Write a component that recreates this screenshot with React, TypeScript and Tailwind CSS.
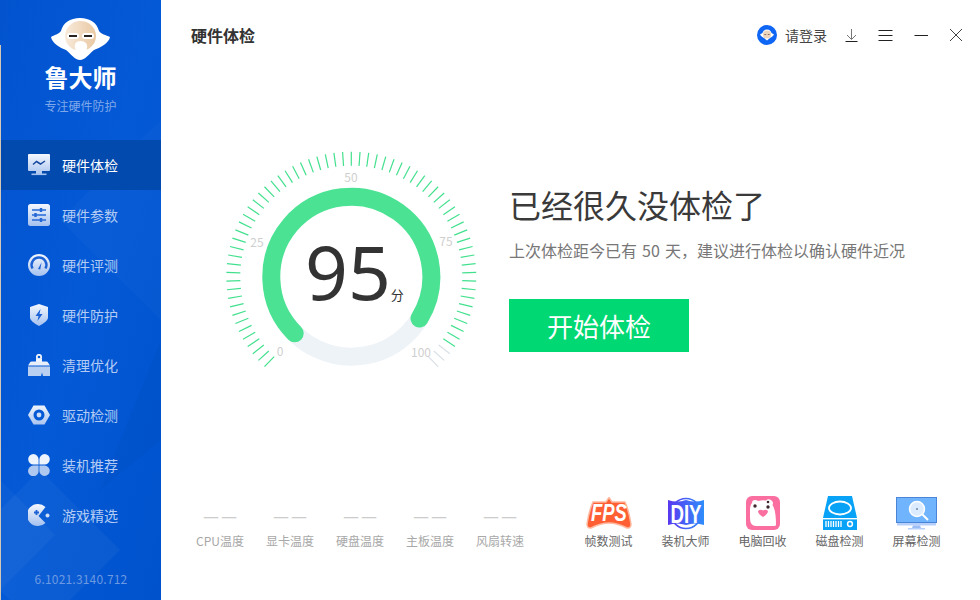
import type { ReactNode } from "react";

const CENTER_X = 141.3;
const CENTER_Y = 136.7;

const polar = (deg: number, r: number) => {
  const a = (deg * Math.PI) / 180;
  return { x: CENTER_X + r * Math.sin(a), y: CENTER_Y - r * Math.cos(a) };
};

const arcPath = (from: number, to: number, r: number) => {
  const s = polar(from, r);
  const e = polar(to, r);
  const large = to - from > 180 ? 1 : 0;
  return `M${s.x} ${s.y} A${r} ${r} 0 ${large} 1 ${e.x} ${e.y}`;
};

function NavIcon({ children }: { children: ReactNode }) {
  return (
    <svg width="22" height="22" viewBox="0 0 22 22" className="shrink-0">
      <defs>
        <linearGradient id="navGrad" gradientUnits="userSpaceOnUse" x1="0" y1="0" x2="0" y2="22">
          <stop offset="0" stopColor="#f4f8fe" />
          <stop offset="1" stopColor="#a5c1ef" />
        </linearGradient>
      </defs>
      {children}
    </svg>
  );
}

const navItems = [
  {
    label: "硬件体检",
    active: true,
    icon: (
      <>
        <rect x="0" y="0" width="22" height="17" rx="1" fill="url(#navGrad)" />
        <path d="M5 10.5 L8.5 7.5 L12.5 10 L17 7" fill="none" stroke="#17499f" strokeWidth="1.5" />
        <rect x="8" y="17" width="6" height="3" fill="#b5cbef" />
        <rect x="3.5" y="19.5" width="15" height="1.6" fill="#a5c1ef" />
      </>
    ),
  },
  {
    label: "硬件参数",
    icon: (
      <>
        <rect x="0" y="0" width="22" height="22" rx="2.5" fill="url(#navGrad)" />
        <path d="M4 6h14M4 11h14M4 16h14" stroke="#2468d6" strokeWidth="1.6" />
        <path d="M13 4v4M7.5 9v4M13 14v4" stroke="#2468d6" strokeWidth="2.4" />
      </>
    ),
  },
  {
    label: "硬件评测",
    icon: (
      <>
        <circle cx="11" cy="11" r="11" fill="url(#navGrad)" />
        <path d="M4.5 14.5 A7.4 7.4 0 1 1 17.5 14.5" fill="none" stroke="#1c62d4" strokeWidth="2.4" />
        <path d="M10 15 L13.5 8.5 L12.2 15.6 Z" fill="#1c62d4" />
      </>
    ),
  },
  {
    label: "硬件防护",
    icon: (
      <>
        <path d="M11 0 L20 3 V14 Q19.5 17.5 11 22 Q2.5 17.5 2 14 V3 Z" fill="url(#navGrad)" />
        <path d="M12.5 5 L7.5 12 H10.5 L9.5 17 L14.5 10 H11.5 Z" fill="#1c62d4" />
      </>
    ),
  },
  {
    label: "清理优化",
    icon: (
      <>
        <circle cx="11" cy="3" r="2.2" fill="none" stroke="url(#navGrad)" strokeWidth="1.8" />
        <rect x="8" y="4.5" width="6" height="3.5" fill="#f0f5fd" />
        <path d="M2 8.5 Q2 7.5 4 7.5 H18 Q20 7.5 20 8.5 L22 11.5 H0 Z" fill="#e8effb" />
        <path d="M0 12.5 H22 V22 H15 L14 18.5 L13 22 H0 Z" fill="#b9cff2" />
      </>
    ),
  },
  {
    label: "驱动检测",
    icon: (
      <>
        <path
          fillRule="evenodd"
          d="M5.5 1.5 H16.5 L22 11 L16.5 20.5 H5.5 L0 11 Z M11 5.5 A5.5 5.5 0 1 0 11 16.5 A5.5 5.5 0 1 0 11 5.5 Z"
          fill="url(#navGrad)"
        />
        <circle cx="11" cy="11" r="2.4" fill="#cfddf6" />
      </>
    ),
  },
  {
    label: "装机推荐",
    icon: (
      <>
        <path d="M5.4 0 A5.4 5.4 0 0 1 10.6 5.4 V10.4 H5.4 A5.2 5.2 0 0 1 5.4 0 Z" fill="#eef4fd" />
        <path d="M16.6 0 A5.2 5.2 0 0 1 16.6 10.4 H11.4 V5.4 A5.4 5.4 0 0 1 16.6 0 Z" fill="#eef4fd" />
        <path d="M5.4 11.6 H10.6 V16.6 A5.3 5.3 0 1 1 5.4 11.6 Z" fill="#aec8f0" />
        <path d="M11.4 11.6 H16.6 A5.2 5.2 0 1 1 11.4 16.6 Z" fill="#aec8f0" />
      </>
    ),
  },
  {
    label: "游戏精选",
    icon: (
      <>
        <path d="M17.5 3 A11 11 0 1 0 17.5 19 L10.5 12 Z" fill="url(#navGrad)" />
        <path d="M8.5 6v5M6 8.5h5" stroke="#1c62d4" strokeWidth="1.8" />
        <circle cx="19.5" cy="11.5" r="2" fill="#cfddf6" />
      </>
    ),
  },
];

function Logo() {
  return (
    <svg width="60" height="42" viewBox="52 18 60 42">
      <defs>
        <linearGradient id="faceGrad" x1="0" y1="0" x2="1" y2="0">
          <stop offset="0" stopColor="#f8eadb" />
          <stop offset="1" stopColor="#e9c9a3" />
        </linearGradient>
      </defs>
      <path
        d="M81 18 C71 18 64 23 62 31 C60 34 55 35 52 37 C53 43 61 48 67 50 C72 54 76 60 81 60 C86 60 90 54 95 50 C101 48 110 43 111 37 C107 35 102 34 100 31 C98 23 91 18 81 18 Z"
        fill="#ffffff"
      />
      <ellipse cx="81.5" cy="36" rx="15.5" ry="15" fill="url(#faceGrad)" />
      <rect x="68" y="33" width="12" height="6" rx="3" fill="#ffffff" />
      <rect x="83" y="33" width="12" height="6" rx="3" fill="#ffffff" />
      <path d="M70 36h8M85 36h8" stroke="#2a2420" strokeWidth="2" />
      <path d="M81.5 41 C77 41 75 44 76 48 C77 52 79 56 82 56 C85 56 87 52 88 48 C89 44 86 41 81.5 41 Z" fill="#ffffff" />
    </svg>
  );
}

function Gauge() {
  const ticks = Array.from({ length: 69 }, (_, i) => -136 + i * 4);
  return (
    <div className="relative h-[240px] w-[280px] shrink-0">
      <svg width="280" height="240" viewBox="0 0 280 240">
        {ticks.map((deg, i) => {
          const a = polar(deg, 111);
          const b = polar(deg, 125);
          return (
            <line
              key={deg}
              x1={a.x}
              y1={a.y}
              x2={b.x}
              y2={b.y}
              stroke={i >= 66 ? "#d8dfe6" : "#42e08e"}
              strokeWidth="1.2"
            />
          );
        })}
        <path d={arcPath(100, 240, 80)} fill="none" stroke="#eef3f8" strokeWidth="18" />
        <path d={arcPath(-135, 121.5, 80)} fill="none" stroke="#4be393" strokeWidth="18" strokeLinecap="round" />
        <g fill="#cfcfcf" fontSize="12" textAnchor="middle">
          <text x="141" y="42">50</text>
          <text x="47" y="107">25</text>
          <text x="236" y="106">75</text>
          <text x="70" y="216">0</text>
          <text x="211" y="217">100</text>
        </g>
      </svg>
      <div className="absolute left-[95px] top-[86px] flex items-baseline text-[#333333]">
        <span className="text-[75px] leading-[90px] [font-family:'Noto_Sans',sans-serif]">95</span>
        <span className="text-[13px] leading-none">分</span>
      </div>
    </div>
  );
}

const temps = ["CPU温度", "显卡温度", "硬盘温度", "主板温度", "风扇转速"];

const tools: { label: string; icon: ReactNode }[] = [
  {
    label: "帧数测试",
    icon: (
      <svg width="46" height="33" viewBox="0 0 46 33">
        <path
          d="M23 0.5 L26 5 H39 Q43 14 45 27 Q45 31.5 41 31 Q31 26 23 26 Q15 26 5 31 Q1 31.5 1 27 Q3 14 7 5 H20 Z"
          fill="#ff5f33"
          stroke="#ffb9a0"
          strokeWidth="1.5"
        />
        <text
          transform="translate(23 24) scale(0.8 1)"
          textAnchor="middle"
          fill="#ffffff"
          fontSize="23"
          fontWeight="700"
          fontStyle="italic"
          className="[font-family:'Liberation_Sans',sans-serif]"
        >
          FPS
        </text>
      </svg>
    ),
  },
  {
    label: "装机大师",
    icon: (
      <svg width="38" height="33" viewBox="0 0 38 33">
        <defs>
          <linearGradient id="diyGrad" x1="0" y1="0" x2="1" y2="0">
            <stop offset="0" stopColor="#5a38f0" />
            <stop offset="1" stopColor="#2f8dfb" />
          </linearGradient>
        </defs>
        <circle cx="19" cy="16.5" r="15" fill="none" stroke="url(#diyGrad)" strokeWidth="1.5" />
        <path d="M1 3 Q10 6 19 3 Q28 6 37 3 V28 Q28 25 19 28 Q10 25 1 28 Z" fill="url(#diyGrad)" />
        <text
          transform="translate(19 25.5) scale(0.72 1)"
          textAnchor="middle"
          fill="#ffffff"
          fontSize="26"
          fontWeight="700"
          className="[font-family:'Liberation_Sans',sans-serif]"
        >
          DIY
        </text>
      </svg>
    ),
  },
  {
    label: "电脑回收",
    icon: (
      <svg width="34" height="34" viewBox="0 0 34 34">
        <rect x="0" y="0" width="34" height="34" rx="6" fill="#fb6fa0" />
        <path d="M4 14 Q4 9 6 7 Q6 4 9 4 Q11 4 12 5 Q16 4 20 4.5 Q22 2.5 25 4 Q28 6 26.5 9 Q30 14 30 29 Q30 30 28 30 H10 Q4 30 4 22 Z" fill="#ffffff" />
        <circle cx="9" cy="10" r="1.7" fill="#40282e" />
        <circle cx="22" cy="11" r="1.7" fill="#40282e" />
        <circle cx="22" cy="6" r="1.3" fill="#40282e" />
        <path d="M12 15 Q14.5 13 17 14.5 Q19.5 13 22 15 Q22 18 17 21 Q12 18 12 15 Z" fill="#fb6fa0" />
      </svg>
    ),
  },
  {
    label: "磁盘检测",
    icon: (
      <svg width="34" height="34" viewBox="0 0 34 34">
        <path d="M5 0 H29 L34 22 V34 H0 V22 Z" fill="#08a2f6" />
        <ellipse cx="17" cy="12" rx="11" ry="6.5" fill="none" stroke="#ffffff" strokeWidth="1.8" />
        <rect x="0" y="22" width="34" height="1.4" fill="#ffffff" />
        <path d="M3 25v6M5.5 25v6M8 25v6M10.5 25v6M13 25v6M15.5 25v6M18 25v6" stroke="#ffffff" strokeWidth="1.3" />
        <circle cx="27" cy="28" r="2.4" fill="none" stroke="#ffffff" strokeWidth="1.5" />
      </svg>
    ),
  },
  {
    label: "屏幕检测",
    icon: (
      <svg width="41" height="33" viewBox="0 0 41 33">
        <rect x="0.5" y="0.5" width="40" height="25" fill="#6fb4fd" stroke="#4a85d8" />
        <rect x="1" y="26" width="39" height="2.5" fill="#b6cffb" />
        <path d="M17 28.5 H24 L25 31 H16 Z" fill="#9cbcf5" />
        <rect x="12" y="31" width="17" height="1.5" fill="#b6cffb" />
        <circle cx="21" cy="12" r="7.5" fill="#dcebfd" stroke="#ffffff" strokeWidth="1.5" />
        <circle cx="21" cy="12" r="0.8" fill="#20406f" />
        <path d="M26.5 17.5 L32 23" stroke="#ffffff" strokeWidth="2" />
      </svg>
    ),
  },
];

export default function App() {
  return (
    <div className="relative flex h-[600px] w-[980px] overflow-hidden bg-white text-[#333333] [font-family:'Noto_Sans_CJK_SC','Noto_Sans',sans-serif]">
      <aside className="relative flex h-full w-[161px] shrink-0 flex-col overflow-hidden bg-gradient-to-br from-[#0353cf] via-[#0459d6] to-[#0052cc]">
        {/* background diamonds */}
        <svg className="absolute inset-0" width="161" height="600" viewBox="0 0 161 600">
          <path d="M40 470 L120 550 L40 630 L-40 550 Z" fill="#ffffff" fillOpacity="0.04" />
          <path d="M0 480 L55 535 L0 590 Z" fill="#ffffff" fillOpacity="0.03" />
          <path d="M161 120 L60 220 L161 320 Z" fill="#ffffff" fillOpacity="0.025" />
          <path d="M161 340 L100 490 L161 440 Z" fill="#003f9e" fillOpacity="0.08" />
        </svg>
        <div className="relative flex h-[140px] flex-col items-center pt-[18px]">
          <Logo />
          <div className="text-[24px] font-bold leading-[34px] text-white">鲁大师</div>
          <div className="mt-[4px] text-[12px] leading-[16px] text-[#7fa8ea]">专注硬件防护</div>
        </div>
        <nav className="relative flex flex-col">
          {navItems.map((item) => (
            <div
              key={item.label}
              className={`flex h-[50px] items-center gap-[12px] pl-[28px] ${item.active ? "bg-[#024aad] text-white" : "text-[#b4ccf3]"}`}
            >
              <NavIcon>{item.icon}</NavIcon>
              <span className="text-[14px] leading-none">{item.label}</span>
            </div>
          ))}
        </nav>
        <div className="relative mt-auto pb-[13px] pl-[1px] text-center text-[12px] leading-[16px] tracking-[0.2px] text-[#6c9ae2]">
          6.1021.3140.712
        </div>
      </aside>
      <div className="absolute bottom-0 left-0 top-[45px] w-px bg-[#d3c8b8]" />

      <main className="flex min-w-0 flex-1 flex-col">
        <header className="flex h-[70px] items-center pl-[30px] pr-[17px]">
          <h1 className="text-[16px] font-bold leading-none text-[#333333]">硬件体检</h1>
          <div className="ml-auto flex items-center">
            <svg width="20" height="20" viewBox="0 0 20 20">
              <circle cx="10" cy="10" r="10" fill="#0f66f5" />
              <path d="M10 4.5 C7 4.5 6 6.5 5.5 8 L3 9.5 C4 11.5 6 12.5 7 13 L10 15.5 L13 13 C14 12.5 16 11.5 17 9.5 L14.5 8 C14 6.5 13 4.5 10 4.5 Z" fill="#ffffff" />
              <ellipse cx="10" cy="9.5" rx="4" ry="4" fill="#ecd5bc" />
              <path d="M7.4 9.5h1.8M10.8 9.5h1.8" stroke="#5b4b3e" strokeWidth="0.7" />
            </svg>
            <span className="ml-[8px] text-[14px] leading-none text-[#444444]">请登录</span>
            <svg className="ml-[17px]" width="15" height="15" viewBox="0 0 15 15" fill="none">
              <path d="M7.5 1v10M3 7l4.5 4.5L12 7" stroke="#777777" strokeWidth="1" />
              <path d="M1.5 13.5h12" stroke="#222222" strokeWidth="1" />
            </svg>
            <svg className="ml-[19px]" width="15" height="15" viewBox="0 0 15 15" fill="none">
              <path d="M0.5 2.5h14M0.5 7.5h14M0.5 12.5h14" stroke="#222222" strokeWidth="1" />
            </svg>
            <svg className="ml-[21px]" width="15" height="15" viewBox="0 0 15 15" fill="none">
              <path d="M0.5 7.5h13.5" stroke="#222222" strokeWidth="1" />
            </svg>
            <svg className="ml-[20px]" width="14" height="14" viewBox="0 0 14 14" fill="none">
              <path d="M1 1l12 12M13 1L1 13" stroke="#444444" strokeWidth="1" />
            </svg>
          </div>
        </header>

        <section className="flex items-start pl-[49px] pt-[70px]">
          <Gauge />
          <div className="ml-[19px] pt-[39px]">
            <h2 className="text-[32px] font-normal leading-[50px] text-[#3a3a3a]">已经很久没体检了</h2>
            <p className="mt-[10px] whitespace-pre text-[16px] leading-[22px] text-[#777777] [word-spacing:1.5px]">
              上次体检距今已有 50 天，建议进行体检以确认硬件近况
            </p>
            <button className="mt-[38px] flex h-[53px] w-[180px] items-center justify-center bg-[#00d873] text-[26px] leading-none text-white">
              开始体检
            </button>
          </div>
        </section>

        <footer className="mt-auto flex items-start justify-between pb-[49px] pl-[24px] pr-[25px]">
          <div className="flex pt-[9px]">
            {temps.map((t) => (
              <div key={t} className="flex w-[70px] flex-col items-center">
                <span className="flex h-[20px] items-center gap-[2px] text-[18px] leading-none text-[#cccccc]">
                  <span>—</span>
                  <span>—</span>
                </span>
                <span className="mt-[6px] text-[12px] leading-[20px] text-[#a8a8a8]">{t}</span>
              </div>
            ))}
          </div>
          <div className="flex">
            {tools.map((t) => (
              <div key={t.label} className="flex w-[77px] flex-col items-center">
                <div className="flex h-[34px] items-center justify-center">{t.icon}</div>
                <span className="mt-[1px] text-[12px] leading-[20px] text-[#666666]">{t.label}</span>
              </div>
            ))}
          </div>
        </footer>
      </main>
    </div>
  );
}
